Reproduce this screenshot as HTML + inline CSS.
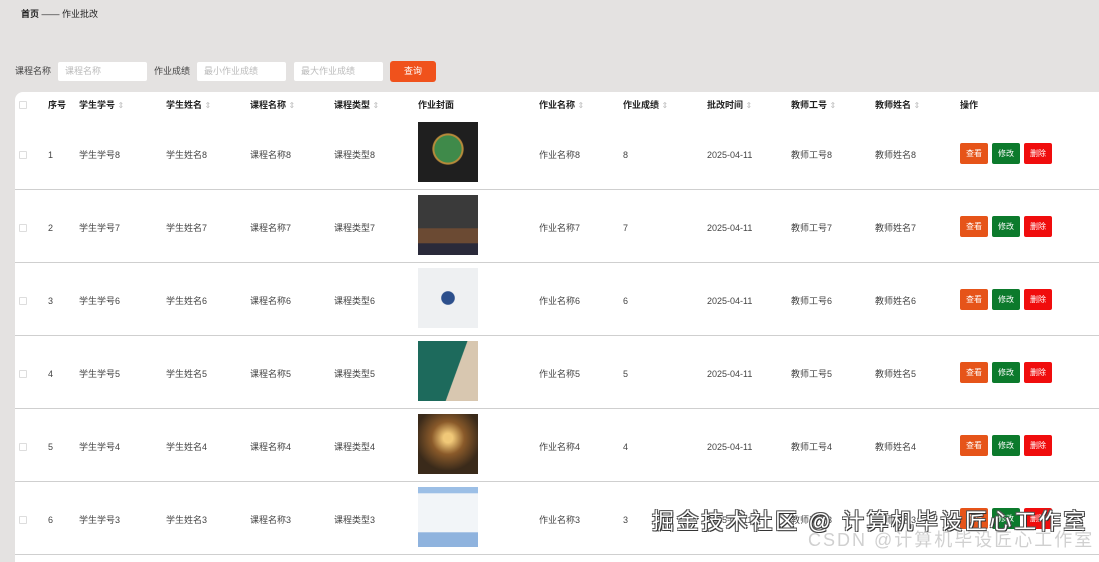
<!DOCTYPE html>
<html><head><meta charset="utf-8"><style>
*{margin:0;padding:0;box-sizing:border-box}
body{width:1099px;height:555px;overflow:hidden;background:#e4e2e1;font-family:"Liberation Sans","Noto Sans CJK SC",sans-serif;font-size:9px;line-height:11px;color:#333;position:relative}
.bc{position:absolute;left:21px;top:9px;font-size:9px;color:#222}
.bc b{font-weight:bold}
.lbl{position:absolute;top:66px;font-size:9px;color:#444}
.inp{position:absolute;top:62px;height:19px;background:#fff;border-radius:2px;color:#bbb;font-size:9px;line-height:19px;padding-left:7px}
.btnq{position:absolute;left:390px;top:61px;width:46px;height:21px;background:#f0521c;border-radius:3px;color:#fff;text-align:center;line-height:21px;font-size:9px}
.tbl{position:absolute;left:15px;top:92px;width:1090px;height:470px;background:#fff;border-radius:8px 0 0 0}
.hd{position:absolute;top:0;height:25px;left:0;right:0}
.c{position:absolute;white-space:nowrap;line-height:11px;height:11px}
.hd .c{top:8px;font-weight:bold;color:#222}
.s{color:#bbb;font-weight:normal;font-size:8px}
.row{position:absolute;left:0;right:0;height:73px;border-bottom:1px solid #cfcfcf}
.row .c{top:33px;color:#444}
.cb{position:absolute;left:4px;width:8px;height:8px;border:1px solid #ddd;border-radius:1px}
.img{position:absolute;left:403px;width:60px;height:60px}
.b{position:absolute;top:26px;height:21px;width:28px;border-radius:2px;color:#fff;text-align:center;line-height:21px;font-size:8px}
.w1{position:absolute;left:652px;top:507px;font-size:22px;line-height:30px;color:#fff;text-shadow:1px 1px 0 #333,-1px -1px 0 #555,1px -1px 0 #555,-1px 1px 0 #555;letter-spacing:2.6px;white-space:nowrap}
.w2{position:absolute;left:808px;top:528px;font-size:18px;line-height:24px;color:rgba(200,200,200,0.85);letter-spacing:2px;white-space:nowrap}
</style></head><body>
<div class="bc"><b>首页</b> —— 作业批改</div>
<div class="lbl" style="left:15px">课程名称</div>
<div class="inp" style="left:58px;width:89px">课程名称</div>
<div class="lbl" style="left:154px">作业成绩</div>
<div class="inp" style="left:197px;width:89px">最小作业成绩</div>
<div class="inp" style="left:294px;width:89px">最大作业成绩</div>
<div class="btnq">查询</div>
<div class="tbl">
<div class="hd">
<div class="cb" style="top:9px"></div>
<div class="c" style="left:33px">序号</div>
<div class="c" style="left:64px">学生学号 <span class="s">⇕</span></div>
<div class="c" style="left:151px">学生姓名 <span class="s">⇕</span></div>
<div class="c" style="left:235px">课程名称 <span class="s">⇕</span></div>
<div class="c" style="left:319px">课程类型 <span class="s">⇕</span></div>
<div class="c" style="left:403px">作业封面</div>
<div class="c" style="left:524px">作业名称 <span class="s">⇕</span></div>
<div class="c" style="left:608px">作业成绩 <span class="s">⇕</span></div>
<div class="c" style="left:692px">批改时间 <span class="s">⇕</span></div>
<div class="c" style="left:776px">教师工号 <span class="s">⇕</span></div>
<div class="c" style="left:860px">教师姓名 <span class="s">⇕</span></div>
<div class="c" style="left:945px">操作</div>
</div>
<div class="row" style="top:25px"><div class="cb" style="top:34px"></div><div class="c" style="left:33px">1</div><div class="c" style="left:64px">学生学号8</div><div class="c" style="left:151px">学生姓名8</div><div class="c" style="left:235px">课程名称8</div><div class="c" style="left:319px">课程类型8</div><div class="img" style="top:5px;background:radial-gradient(circle at 50% 45%,#3f8a4a 0 30%,#b58a3a 31% 34%,#1f1f1f 36%)"></div><div class="c" style="left:524px">作业名称8</div><div class="c" style="left:608px">8</div><div class="c" style="left:692px">2025-04-11</div><div class="c" style="left:776px">教师工号8</div><div class="c" style="left:860px">教师姓名8</div><div class="b" style="left:945px;background:#e65419">查看</div><div class="b" style="left:977px;background:#0c7a2c">修改</div><div class="b" style="left:1009px;background:#f00d0d">删除</div></div>
<div class="row" style="top:98px"><div class="cb" style="top:34px"></div><div class="c" style="left:33px">2</div><div class="c" style="left:64px">学生学号7</div><div class="c" style="left:151px">学生姓名7</div><div class="c" style="left:235px">课程名称7</div><div class="c" style="left:319px">课程类型7</div><div class="img" style="top:5px;background:linear-gradient(#3a3a3a 0 55%,#6b4a33 56% 80%,#2a2a3a 81%)"></div><div class="c" style="left:524px">作业名称7</div><div class="c" style="left:608px">7</div><div class="c" style="left:692px">2025-04-11</div><div class="c" style="left:776px">教师工号7</div><div class="c" style="left:860px">教师姓名7</div><div class="b" style="left:945px;background:#e65419">查看</div><div class="b" style="left:977px;background:#0c7a2c">修改</div><div class="b" style="left:1009px;background:#f00d0d">删除</div></div>
<div class="row" style="top:171px"><div class="cb" style="top:34px"></div><div class="c" style="left:33px">3</div><div class="c" style="left:64px">学生学号6</div><div class="c" style="left:151px">学生姓名6</div><div class="c" style="left:235px">课程名称6</div><div class="c" style="left:319px">课程类型6</div><div class="img" style="top:5px;background:radial-gradient(circle at 50% 50%,#2c4f8c 0 15%,#eef0f2 17%)"></div><div class="c" style="left:524px">作业名称6</div><div class="c" style="left:608px">6</div><div class="c" style="left:692px">2025-04-11</div><div class="c" style="left:776px">教师工号6</div><div class="c" style="left:860px">教师姓名6</div><div class="b" style="left:945px;background:#e65419">查看</div><div class="b" style="left:977px;background:#0c7a2c">修改</div><div class="b" style="left:1009px;background:#f00d0d">删除</div></div>
<div class="row" style="top:244px"><div class="cb" style="top:34px"></div><div class="c" style="left:33px">4</div><div class="c" style="left:64px">学生学号5</div><div class="c" style="left:151px">学生姓名5</div><div class="c" style="left:235px">课程名称5</div><div class="c" style="left:319px">课程类型5</div><div class="img" style="top:5px;background:linear-gradient(110deg,#1d6a5c 0 60%,#d8c7b0 61%)"></div><div class="c" style="left:524px">作业名称5</div><div class="c" style="left:608px">5</div><div class="c" style="left:692px">2025-04-11</div><div class="c" style="left:776px">教师工号5</div><div class="c" style="left:860px">教师姓名5</div><div class="b" style="left:945px;background:#e65419">查看</div><div class="b" style="left:977px;background:#0c7a2c">修改</div><div class="b" style="left:1009px;background:#f00d0d">删除</div></div>
<div class="row" style="top:317px"><div class="cb" style="top:34px"></div><div class="c" style="left:33px">5</div><div class="c" style="left:64px">学生学号4</div><div class="c" style="left:151px">学生姓名4</div><div class="c" style="left:235px">课程名称4</div><div class="c" style="left:319px">课程类型4</div><div class="img" style="top:5px;background:radial-gradient(circle at 50% 40%,#f0c878 0 10%,#8a5a2a 35%,#3a2a1a 70%)"></div><div class="c" style="left:524px">作业名称4</div><div class="c" style="left:608px">4</div><div class="c" style="left:692px">2025-04-11</div><div class="c" style="left:776px">教师工号4</div><div class="c" style="left:860px">教师姓名4</div><div class="b" style="left:945px;background:#e65419">查看</div><div class="b" style="left:977px;background:#0c7a2c">修改</div><div class="b" style="left:1009px;background:#f00d0d">删除</div></div>
<div class="row" style="top:390px"><div class="cb" style="top:34px"></div><div class="c" style="left:33px">6</div><div class="c" style="left:64px">学生学号3</div><div class="c" style="left:151px">学生姓名3</div><div class="c" style="left:235px">课程名称3</div><div class="c" style="left:319px">课程类型3</div><div class="img" style="top:5px;background:linear-gradient(#9cbfe6 0 10%,#f2f5f8 11% 75%,#8fb3de 76%)"></div><div class="c" style="left:524px">作业名称3</div><div class="c" style="left:608px">3</div><div class="c" style="left:692px">2025-04-11</div><div class="c" style="left:776px">教师工号3</div><div class="c" style="left:860px">教师姓名3</div><div class="b" style="left:945px;background:#e65419">查看</div><div class="b" style="left:977px;background:#0c7a2c">修改</div><div class="b" style="left:1009px;background:#f00d0d">删除</div></div>
</div>
<div class="w1">掘金技术社区 @ 计算机毕设匠心工作室</div>
<div class="w2">CSDN @计算机毕设匠心工作室</div>
</body></html>
